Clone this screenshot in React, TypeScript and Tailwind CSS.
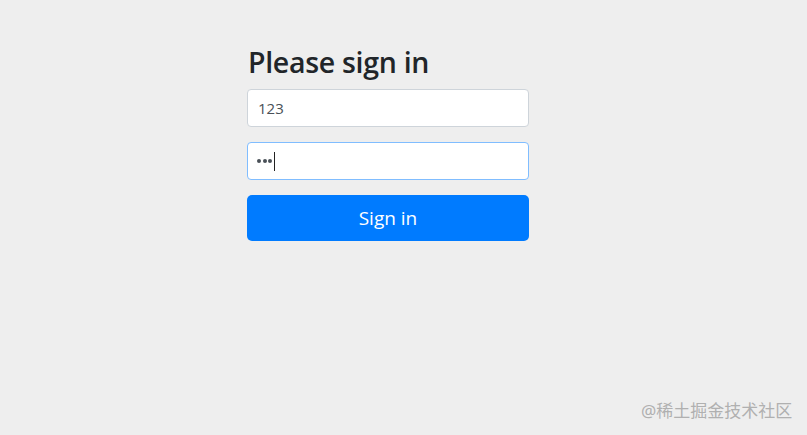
import React from "react";

export default function App() {
  return (
    <div
      className="w-[807px] h-[435px] bg-[#eeeeee] relative overflow-hidden"
      style={{ fontFamily: '"Open Sans", "Noto Sans", sans-serif' }}
    >
      <div className="pl-[247px] pt-[43px]">
        <div className="w-[282px] flex flex-col">
          <h2 className="text-[28.5px] leading-[38px] font-semibold text-[#212529] mb-[8px] pl-[1px] tracking-[-0.3px]">
            Please sign in
          </h2>
          <div className="h-[38px] bg-white border border-[#ced4da] rounded-[4px] flex items-center px-[10px] text-[15px] text-[#495057] mb-[15px]">
            123
          </div>
          <div className="h-[38px] bg-white border border-[#80bdff] rounded-[4px] flex items-center pl-[9px] mb-[15px]">
            <div className="flex items-center gap-[1.5px]">
              <span className="w-[4px] h-[4px] rounded-full bg-[#495057]"></span>
              <span className="w-[4px] h-[4px] rounded-full bg-[#495057]"></span>
              <span className="w-[4px] h-[4px] rounded-full bg-[#495057]"></span>
            </div>
            <span className="w-[1px] h-[19px] bg-[#222] ml-[2px]"></span>
          </div>
          <div className="h-[46px] bg-[#007bff] rounded-[5px] flex items-center justify-center text-white text-[19px]">
            Sign in
          </div>
        </div>
      </div>
      <div
        className="absolute left-[641px] top-[398px] text-[17px] text-[#b0b0b0]"
        style={{ fontFamily: '"Noto Sans", "Noto Sans CJK SC", sans-serif' }}
      >
        @稀土掘金技术社区
      </div>
    </div>
  );
}
